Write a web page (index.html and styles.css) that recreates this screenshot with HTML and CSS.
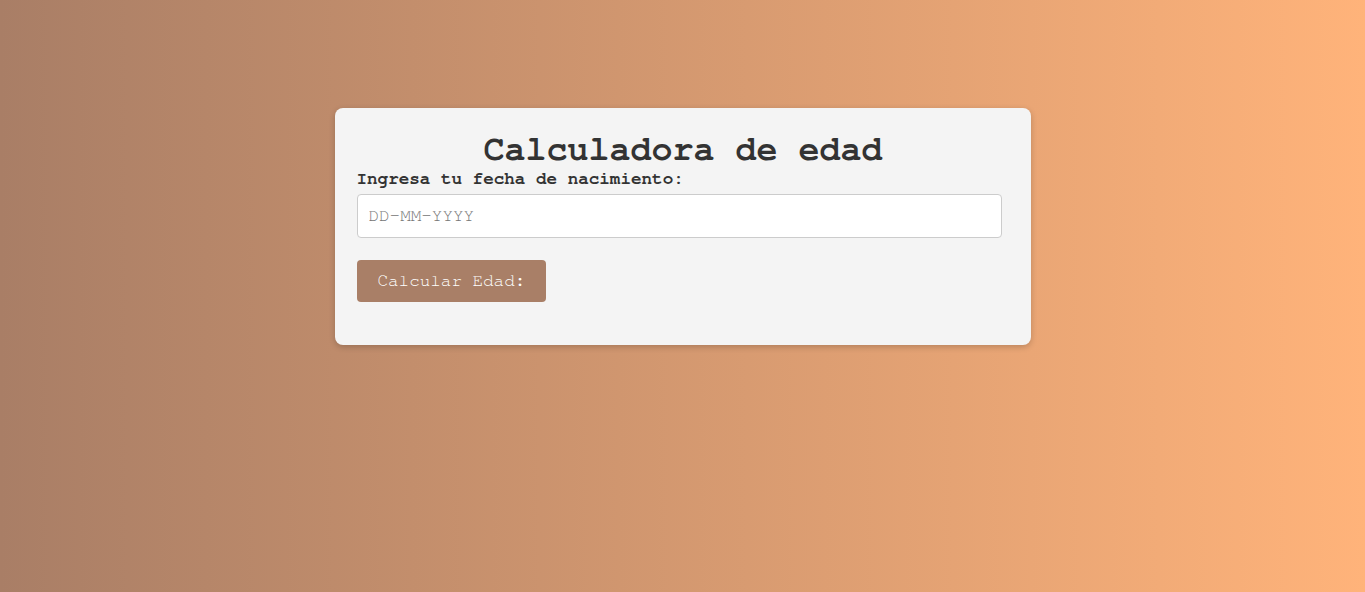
FILE: index.html
```html
<!DOCTYPE html>
<html lang="es">
<head>
<meta charset="utf-8">
<title>Calculadora de edad</title>
<link rel="stylesheet" href="styles.css">
</head>
<body>
<div class="card">
  <h1 class="title">Calculadora de edad</h1>
  <label class="label" for="fecha">Ingresa tu fecha de nacimiento:</label>
  <input class="input" id="fecha" type="text" placeholder="DD-MM-YYYY">
  <button class="btn" type="button">Calcular Edad:</button>
</div>
</body>
</html>
```
FILE: styles.css
```css
html, body {
  height: 100%;
}
body {
  margin: 0;
  padding: 8px;
  box-sizing: border-box;
  font-family: "Nimbus Mono PS", "Nimbus Mono L", "FreeMono", "Courier", "Liberation Mono", monospace;
  background: linear-gradient(to right, #a97e66, #ffb37a);
  color: #333;
}
.card {
  width: 696px;
  box-sizing: border-box;
  margin: 100px auto 0;
  padding: 24px 29px 43px 22px;
  background: #f4f4f4;
  border-radius: 8px;
  box-shadow: 0 2px 6px rgba(0, 0, 0, 0.2);
  display: flex;
  flex-direction: column;
  align-items: flex-start;
}
.title {
  align-self: stretch;
  text-align: center;
  margin: 0;
  font-size: 35px;
  line-height: 36px;
  font-weight: bold;
  color: #333;
  padding-left: 8px;
}
.label {
  font-weight: bold;
  font-size: 17.6px;
  line-height: 20px;
  margin-top: 1px;
  color: #333;
}
.input {
  margin-top: 5px;
  width: 100%;
  height: 44px;
  box-sizing: border-box;
  padding: 0 11px;
  border: 1px solid #ccc;
  border-radius: 4px;
  background: #fff;
  font-family: inherit;
  font-size: 17.6px;
  color: #333;
  outline: none;
}
.input::placeholder {
  color: #757575;
}
.btn {
  margin-top: 22px;
  height: 42px;
  padding: 0 21px;
  border: none;
  border-radius: 4px;
  background: #a97f67;
  color: #fff;
  font-family: inherit;
  font-size: 17.6px;
  cursor: pointer;
}
```
